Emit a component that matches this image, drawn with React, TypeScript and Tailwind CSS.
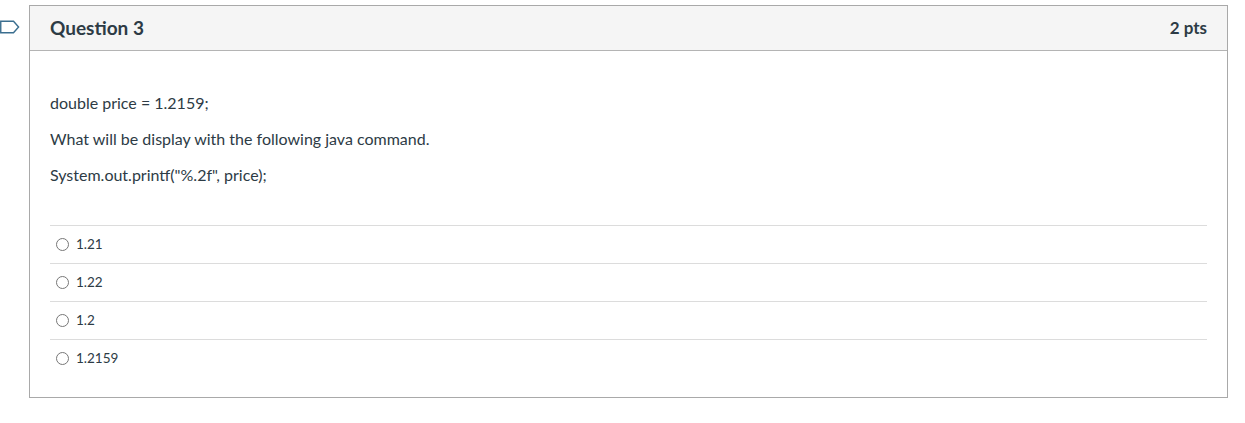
const answers = ['1.21', '1.22', '1.2', '1.2159'];

export default function App() {
  return (
    <div className="flex h-[423px] w-[1245px] items-start bg-white text-[#2d3b45] [font-family:Lato,'Liberation_Sans',sans-serif]">
      <div className="mt-[20px] w-[29px] shrink-0">
        <svg width="20" height="14" viewBox="0 0 20 14" fill="none">
          <path d="M0.75 1.25 H13.5 L18.6 7 L13.5 12.75 H0.75 Z" stroke="#3a6e8f" strokeWidth="1.4" strokeLinejoin="miter" />
        </svg>
      </div>

      <div className="mt-[5px] w-[1199px] border border-[#a9a9a9]">
        <div className="flex h-[45px] items-center justify-between border-b border-[#b4b4b4] bg-[#f5f5f5] px-[20px]">
          <h2 className="text-[19px] font-bold">Question 3</h2>
          <span className="text-[17px] font-bold">2 pts</span>
        </div>

        <div className="px-[20px] pt-[40px] pb-[20px]">
          <div className="flex flex-col gap-[12px] text-[16px] leading-[24px]">
            <p>double price = 1.2159;</p>
            <p>What will be display with the following java command.</p>
            <p>System.out.printf("%.2f", price);</p>
          </div>

          <div className="mt-[38px]">
            {answers.map((a) => (
              <label key={a} className="flex h-[38px] items-center border-t border-[#dcdcdc] text-[13.5px]">
                <span className="ml-[6px] mr-[7px] h-[13px] w-[13px] rounded-full border border-[#777]" />
                <span>{a}</span>
              </label>
            ))}
          </div>
        </div>
      </div>
    </div>
  );
}
